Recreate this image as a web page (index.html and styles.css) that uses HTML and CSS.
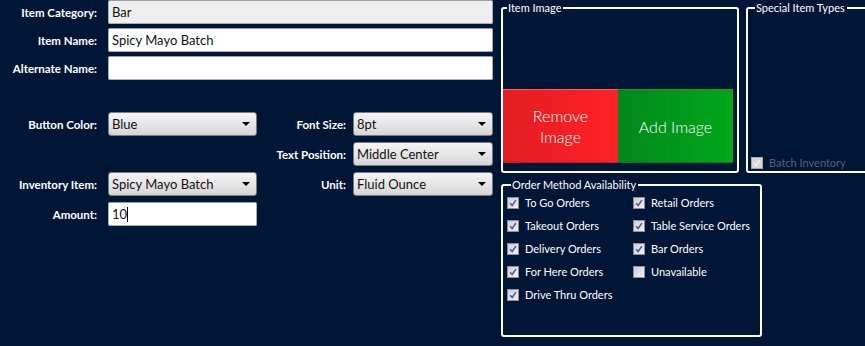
FILE: index.html
```html
<!DOCTYPE html>
<html lang="en">
<head>
    <meta charset="UTF-8">
    <meta name="viewport" content="width=device-width, initial-scale=1.0">
    <title>Item Editor</title>
    <link rel="stylesheet" href="styles.css">
</head>
<body>
<div class="screen">
    <div class="form">
        <div class="top-grid">
            <label>Item Category:</label><div class="field readonly">Bar</div>
            <label>Item Name:</label><div class="field">Spicy Mayo Batch</div>
            <label>Alternate Name:</label><div class="field"></div>
        </div>
        <div class="pick-grid">
            <label>Button Color:</label><div class="combo">Blue</div>
            <label class="right">Font Size:</label><div class="combo">8pt</div>

            <label class="right">Text Position:</label><div class="combo">Middle Center</div>

            <label>Inventory Item:</label><div class="combo">Spicy Mayo Batch</div>
            <label class="right">Unit:</label><div class="combo">Fluid Ounce</div>

            <label>Amount:</label><div class="field">10<span class="caret"></span></div>
        </div>
    </div>

    <div class="side">
        <div class="side-top">
            <fieldset class="group image-group">
                <legend>Item Image</legend>
                <div class="image-body">
                    <div class="img-btn remove">Remove<br>Image</div>
                    <div class="img-btn add">Add Image</div>
                </div>
            </fieldset>
            <fieldset class="group special-group">
                <legend>Special Item Types</legend>
                <div class="special-body">
                    <div class="check disabled"><span class="box"><svg viewBox="0 0 12 12"><path d="M2.5 6.2 L5 9 L9.5 2.5"/></svg></span>Batch Inventory</div>
                </div>
            </fieldset>
        </div>
        <fieldset class="group order-group">
            <legend>Order Method Availability</legend>
            <div class="order-grid">
                <div class="check"><span class="box"><svg viewBox="0 0 12 12"><path d="M2.5 6.2 L5 9 L9.5 2.5"/></svg></span>To Go Orders</div>
                <div class="check"><span class="box"><svg viewBox="0 0 12 12"><path d="M2.5 6.2 L5 9 L9.5 2.5"/></svg></span>Retail Orders</div>
                <div class="check"><span class="box"><svg viewBox="0 0 12 12"><path d="M2.5 6.2 L5 9 L9.5 2.5"/></svg></span>Takeout Orders</div>
                <div class="check"><span class="box"><svg viewBox="0 0 12 12"><path d="M2.5 6.2 L5 9 L9.5 2.5"/></svg></span>Table Service Orders</div>
                <div class="check"><span class="box"><svg viewBox="0 0 12 12"><path d="M2.5 6.2 L5 9 L9.5 2.5"/></svg></span>Delivery Orders</div>
                <div class="check"><span class="box"><svg viewBox="0 0 12 12"><path d="M2.5 6.2 L5 9 L9.5 2.5"/></svg></span>Bar Orders</div>
                <div class="check"><span class="box"><svg viewBox="0 0 12 12"><path d="M2.5 6.2 L5 9 L9.5 2.5"/></svg></span>For Here Orders</div>
                <div class="check"><span class="box"></span>Unavailable</div>
                <div class="check"><span class="box"><svg viewBox="0 0 12 12"><path d="M2.5 6.2 L5 9 L9.5 2.5"/></svg></span>Drive Thru Orders</div>
            </div>
        </fieldset>
    </div>
</div>
</body>
</html>
```

FILE: styles.css
```css
html, body{
    margin: 0;
    padding: 0;
    background: #001637;
    overflow: hidden
}
.screen{
    width: 865px;
    height: 346px;
    display: flex;
    font-family: "Segoe UI", Lato, "Liberation Sans", sans-serif;
    color: #ffffff
}
.form{
    width: 493px;
    padding-top: 0
}
label{
    font-size: 11.5px;
    font-weight: 700;
    text-align: right;
    align-self: center
}
.top-grid{
    display: grid;
    grid-template-columns: 97px 385px;
    column-gap: 11px;
    grid-auto-rows: 24px;
    row-gap: 4px
}
.pick-grid{
    margin-top: 32px;
    display: grid;
    grid-template-columns: 108px 149px 96px 140px;
    grid-auto-rows: 24px;
    row-gap: 6px
}
.pick-grid label{
    grid-column: 1;
    padding-right: 11px
}
.pick-grid label.right{
    grid-column: 3;
    padding-right: 7px
}
.field{
    box-sizing: border-box;
    height: 24px;
    background: #ffffff;
    border: 1px solid #abadb3;
    border-top-color: #9a9ca6;
    border-radius: 2px;
    color: #111111;
    font-size: 13px;
    line-height: 22px;
    padding-left: 3px
}
.field.readonly{
    background: #eeeeee
}
.caret{
    display: inline-block;
    width: 1px;
    height: 15px;
    background: #000000;
    vertical-align: -3px
}
.combo{
    box-sizing: border-box;
    height: 24px;
    position: relative;
    background: linear-gradient(#f4f4f4, #e6e6e6 50%, #d6d6d6);
    border: 1px solid #7a7a7a;
    border-radius: 3px;
    color: #111111;
    font-size: 13px;
    line-height: 22px;
    padding-left: 3px
}
.combo::after{
    content: "";
    position: absolute;
    right: 6px;
    top: 9px;
    border-left: 4px solid transparent;
    border-right: 4px solid transparent;
    border-top: 4px solid #000000
}

/* right side groups */
.side{
    margin-left: 8px;
    padding-top: 1px
}
.side-top{
    display: flex;
    gap: 7px
}
.group{
    margin: 0;
    padding: 0;
    border: 2px solid #ffffff;
    border-radius: 3px;
    min-width: 0
}
.group legend{
    font-size: 11px;
    line-height: 13px;
    padding: 0 2px 0 1px;
    margin-left: 4px;
    color: #ffffff
}
.image-group{
    width: 238px;
    box-sizing: border-box;
    padding: 0 4px 6px 0
}
.image-body{
    height: 149px;
    display: flex;
    align-items: flex-end
}
.img-btn{
    width: 115px;
    height: 74px;
    display: flex;
    align-items: center;
    justify-content: center;
    text-align: center;
    font-size: 16px;
    font-weight: 300;
    line-height: 21px;
    color: #ffffff;
    box-sizing: border-box
}
.img-btn.remove{
    background: linear-gradient(90deg, #e31d22, #ff2126);
    border-top: 1px solid #ff6060;
    border-bottom: 1px solid #c81a1e
}
.img-btn.add{
    background: linear-gradient(90deg, #02871d, #00a81a);
    border-top: 1px solid #10a020;
    border-bottom: 1px solid #067a18
}
.special-group{
    width: 130px;
    box-sizing: border-box;
    padding: 0 0 2px 3px
}
.special-body{
    height: 155px;
    display: flex;
    align-items: flex-end
}
.order-group{
    margin-top: 5px;
    width: 261px;
    height: 159px;
    box-sizing: border-box;
    padding: 0 0 0 4px
}
.order-grid{
    display: grid;
    grid-template-columns: 126px 120px;
    grid-auto-rows: 23px
}
.check{
    display: flex;
    align-items: center;
    font-size: 11px;
    color: #ffffff;
    white-space: nowrap
}
.box{
    width: 12px;
    height: 12px;
    box-sizing: border-box;
    border: 1px solid #8e8f8f;
    background: linear-gradient(135deg, #cfd0d6, #f0f0f3);
    margin-right: 6px;
    display: inline-flex;
    flex: none
}
.box svg{
    width: 10px;
    height: 10px
}
.box path{
    fill: none;
    stroke: #4c5a98;
    stroke-width: 1.8
}
.check.disabled{
    color: #576074
}
.check.disabled .box{
    border-color: #a8a8a8;
    background: #d8d8d8
}
.check.disabled .box path{
    stroke: #f2f2f2
}
```
